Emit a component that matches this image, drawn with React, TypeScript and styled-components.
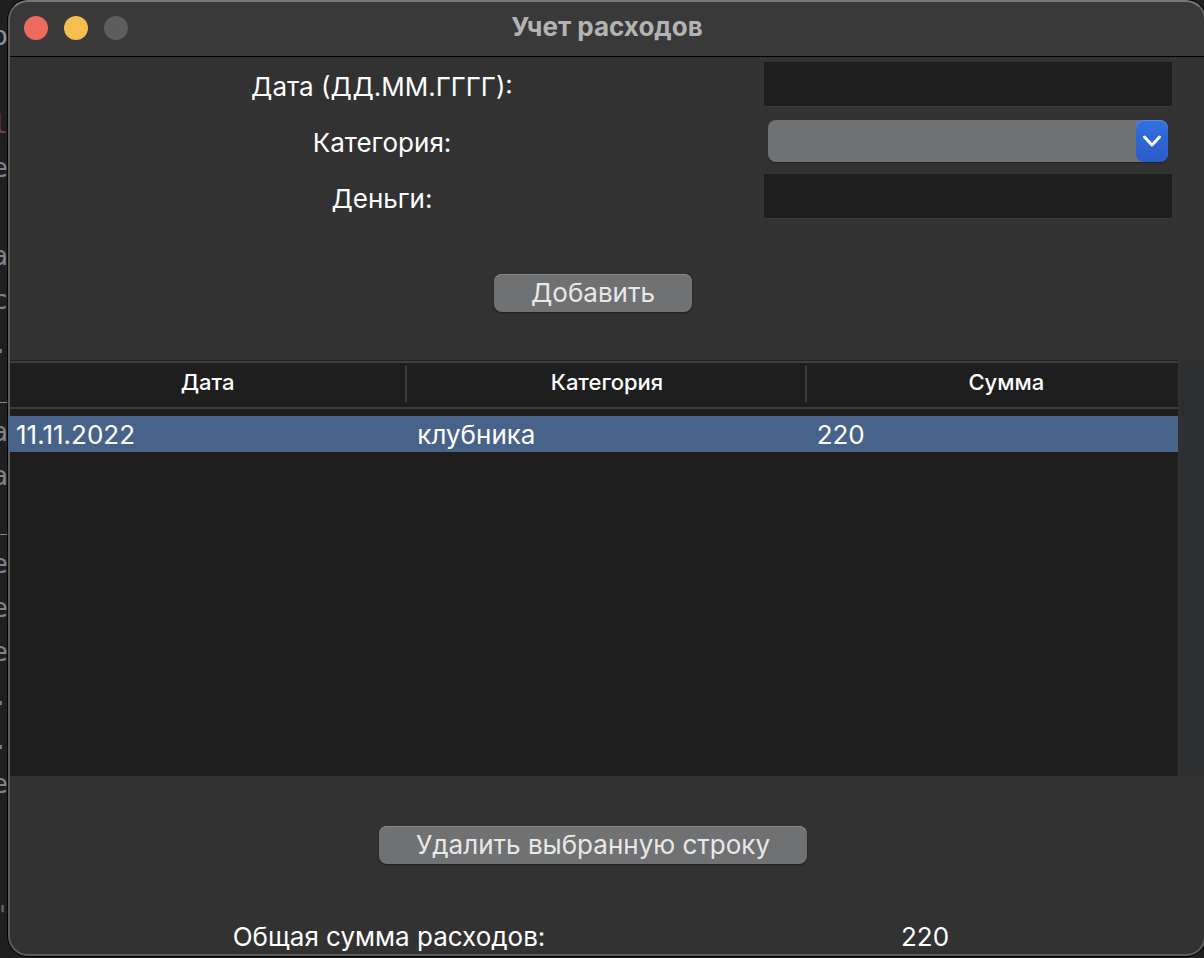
import React, { useState } from "react";
import styled, { createGlobalStyle } from "styled-components";

const GlobalStyle = createGlobalStyle`
  *, *::before, *::after { box-sizing: border-box; }
  body {
    margin: 0;
    background: #1f1f20;
    color: #fff;
    font-family: Inter, "Liberation Sans", sans-serif;
    font-size: 26px;
    line-height: 32px;
  }
  button, input, select { font: inherit; }
`;

const Desktop = styled.div`
  display: flex;
  min-height: 100vh;
  padding-bottom: 2px;
  overflow: hidden;
`;

const Editor = styled.pre`
  flex: 0 0 8px;
  margin: 0;
  padding: 14px 0 0;
  overflow: hidden;
  font: 26px/44px "DejaVu Sans Mono", monospace;
`;

const CodeLine = styled.span<{ $color?: string }>`
  display: flex;
  justify-content: flex-end;
  height: 44px;
  color: ${(p) => p.$color ?? "#7e8590"};
`;

const Window = styled.main`
  position: relative;
  display: flex;
  flex: 1;
  flex-direction: column;
  min-width: 0;
  margin-right: -2px;
  overflow: hidden;
  border-radius: 20px;
  background: #323232;
  box-shadow: 0 0 0 1px #000;

  &::after {
    content: "";
    position: absolute;
    inset: 0;
    border: 2px solid #5c5c5c;
    border-top-color: #777;
    border-radius: 20px;
    pointer-events: none;
  }
`;

const TitleBar = styled.header`
  display: grid;
  grid-template-columns: 1fr auto 1fr;
  align-items: center;
  height: 57px;
  padding: 0 16px;
  border-bottom: 1px solid #000;
  background: #393939;
`;

const Lights = styled.div`
  display: flex;
  gap: 16px;
`;

const Light = styled.button<{ $color: string }>`
  width: 24px;
  height: 24px;
  padding: 0;
  border: 0;
  border-radius: 50%;
  background: ${(p) => p.$color};
`;

const Title = styled.h1`
  margin: 0;
  padding-bottom: 2px;
  color: #b3b3b3;
  font-size: 26px;
  font-weight: 700;
  line-height: 32px;
`;

const Form = styled.form`
  display: flex;
  flex-direction: column;
  padding-right: 34px;
`;

const Field = styled.div`
  display: grid;
  grid-template-columns: 748fr 416fr;
  align-items: center;
  height: 56px;
`;

const Label = styled.label`
  padding-top: 4px;
  text-align: center;
`;

const TextInput = styled.input`
  height: 44px;
  min-width: 0;
  margin: 0 0 2px 8px;
  padding: 0 8px;
  border: 0;
  outline: 0;
  background: #1e1e1e;
  color: #fff;
  box-shadow: 0 1px 0 #3a3a3a;
`;

const SelectBox = styled.div`
  position: relative;
  display: flex;
  height: 42px;
  margin: 0 4px 0 12px;
  overflow: hidden;
  border-radius: 8px;
  background: #707173;
  box-shadow: 0 1px 1px #222;
`;

const Select = styled.select`
  flex: 1;
  min-width: 0;
  padding: 0 40px 0 12px;
  border: 0;
  outline: 0;
  appearance: none;
  background: transparent;
  color: #fff;
`;

const SelectArrow = styled.span`
  position: absolute;
  inset: 0 0 0 auto;
  display: flex;
  align-items: center;
  justify-content: center;
  width: 32px;
  border-radius: 8px;
  background: linear-gradient(#356fe0, #295cc8);
  box-shadow: inset 0 1px 0 #5588e8;
  pointer-events: none;
`;

const ButtonRow = styled.div<{ $pad: string }>`
  display: flex;
  justify-content: center;
  padding: ${(p) => p.$pad};
`;

const PushButton = styled.button`
  height: 38px;
  padding: 0 37px;
  border: 0;
  border-radius: 8px;
  background: #707173;
  color: #e8e8e8;
  line-height: 38px;
  white-space: nowrap;
  box-shadow: inset 0 1px 0 #8b8b8c, 0 1px 2px #1c1c1c;
`;

const TableArea = styled.section`
  display: flex;
  flex: 1;
  min-height: 200px;
`;

const TableView = styled.div`
  flex: 1;
  min-width: 0;
  overflow: hidden;
  border-top: 1px solid #222;
  background: #1e1e1e;
`;

const Table = styled.table`
  width: calc(100% + 28px);
  table-layout: fixed;
  border-collapse: separate;
  border-spacing: 0;
`;

const HeadCell = styled.th`
  height: 48px;
  padding: 0;
  border: solid #3c3c3c;
  border-width: 2px 0;
  font-size: 22px;
  font-weight: 500;

  &:nth-child(n + 2) span { border-left: 2px solid #3c3c3c; margin-left: -2px; }
`;

const HeadText = styled.span`
  display: block;
  height: 36px;
  margin-bottom: 2px;
  line-height: 32px;
`;

const Body = styled.tbody`
  &::before {
    content: "";
    display: table-row;
    height: 7px;
  }
`;

const Cell = styled.td`
  position: relative;
  z-index: 1;
  height: 36px;
  padding: 2px 8px 0;
  background: #48638a;
  line-height: 34px;

  &:nth-child(n + 2) { padding-left: 10px; }
`;

const ScrollTrack = styled.div`
  flex: 0 0 28px;
  border-left: 2px solid #313131;
  background: #2d2e30;
`;

const Totals = styled.footer`
  display: grid;
  grid-template-columns: 762fr 310fr 126fr;
  height: 44px;
  padding-top: 9px;
  text-align: center;
`;

const code: { text: string; color?: string }[] = [
  { text: "o", color: "#8c95a3" },
  { text: " " },
  { text: "l", color: "#69406d" },
  { text: "e" },
  { text: " " },
  { text: "a" },
  { text: "c" },
  { text: "." },
  { text: "_" },
  { text: "a" },
  { text: "a" },
  { text: "_" },
  { text: "e" },
  { text: "e" },
  { text: "e" },
  { text: "." },
  { text: "." },
  { text: "e" },
  { text: " " },
  { text: " " },
  { text: "\"", color: "#56704e" },
];

const expenses = [{ date: "11.11.2022", category: "клубника", amount: 220 }];

export default function App() {
  const [date, setDate] = useState("");
  const [money, setMoney] = useState("");
  const total = expenses.reduce((sum, e) => sum + e.amount, 0);

  return (
    <>
      <GlobalStyle />
      <Desktop>
        <Editor aria-hidden="true">
          {code.map((line, i) => (
            <CodeLine key={i} $color={line.color}>{line.text}</CodeLine>
          ))}
        </Editor>
        <Window>
          <TitleBar>
            <Lights>
              <Light $color="#ee6a5f" aria-label="Закрыть" />
              <Light $color="#f5bf4f" aria-label="Свернуть" />
              <Light $color="#5d5d5d" aria-label="Развернуть" disabled />
            </Lights>
            <Title>Учет расходов</Title>
          </TitleBar>
          <Form onSubmit={(e) => e.preventDefault()}>
            <Field>
              <Label htmlFor="date">Дата (ДД.ММ.ГГГГ):</Label>
              <TextInput id="date" value={date} onChange={(e) => setDate(e.target.value)} />
            </Field>
            <Field>
              <Label htmlFor="category">Категория:</Label>
              <SelectBox>
                <Select id="category" defaultValue="">
                  <option value=""></option>
                  <option value="клубника">клубника</option>
                </Select>
                <SelectArrow>
                  <svg width="20" height="14" viewBox="0 0 20 14" fill="none" stroke="#fff" strokeWidth="3" strokeLinecap="round" strokeLinejoin="round">
                    <path d="M2.5 3l7.5 8 7.5-8" />
                  </svg>
                </SelectArrow>
              </SelectBox>
            </Field>
            <Field>
              <Label htmlFor="money">Деньги:</Label>
              <TextInput id="money" value={money} onChange={(e) => setMoney(e.target.value)} />
            </Field>
            <ButtonRow $pad="49px 0 48px 6px">
              <PushButton type="submit">Добавить</PushButton>
            </ButtonRow>
          </Form>
          <TableArea>
            <TableView>
              <Table>
                <thead>
                  <tr>
                    <HeadCell scope="col"><HeadText>Дата</HeadText></HeadCell>
                    <HeadCell scope="col"><HeadText>Категория</HeadText></HeadCell>
                    <HeadCell scope="col"><HeadText>Сумма</HeadText></HeadCell>
                  </tr>
                </thead>
                <Body>
                  {expenses.map((e) => (
                    <tr key={e.date}>
                      <Cell>{e.date}</Cell>
                      <Cell>{e.category}</Cell>
                      <Cell>{e.amount}</Cell>
                    </tr>
                  ))}
                </Body>
              </Table>
            </TableView>
            <ScrollTrack />
          </TableArea>
          <ButtonRow $pad="50px 28px 48px 0">
            <PushButton type="button">Удалить выбранную строку</PushButton>
          </ButtonRow>
          <Totals>
            <span>Общая сумма расходов:</span>
            <span>{total}</span>
          </Totals>
        </Window>
      </Desktop>
    </>
  );
}
